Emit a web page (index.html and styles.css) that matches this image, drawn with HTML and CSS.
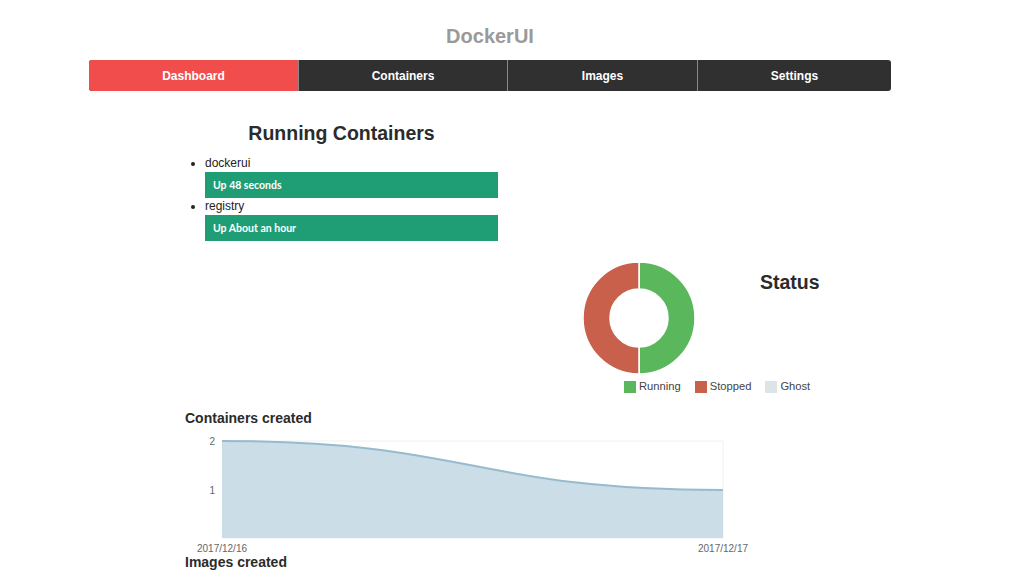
FILE: index.html
```html
<!DOCTYPE html>
<html>
<head>
<meta charset="utf-8">
<title>DockerUI</title>
<link rel="stylesheet" href="styles.css">
</head>
<body>
<header class="header">
  <h1 class="title">DockerUI</h1>
  <nav class="nav">
    <a class="tab tab-dash active">Dashboard</a>
    <a class="tab tab-cont">Containers</a>
    <a class="tab tab-img">Images</a>
    <a class="tab tab-set">Settings</a>
  </nav>
</header>
<main class="main">
  <section class="running">
    <h2 class="running-title">Running Containers</h2>
    <ul class="clist">
      <li class="citem"><span class="cname">dockerui</span><div class="cbar">Up 48 seconds</div></li>
      <li class="citem"><span class="cname">registry</span><div class="cbar">Up About an hour</div></li>
    </ul>
  </section>
  <section class="status">
    <div class="status-row">
      <svg class="donut" width="114" height="114" viewBox="0 0 114 114">
        <path d="M57,1 A56,56 0 0 1 57,113 L57,86 A29,29 0 0 0 57,28 Z" fill="#5bb75b" stroke="#fff" stroke-width="1.5"/>
        <path d="M57,1 A56,56 0 0 0 57,113 L57,86 A29,29 0 0 1 57,28 Z" fill="#c8604c" stroke="#fff" stroke-width="1.5"/>
      </svg>
      <h2 class="status-title">Status</h2>
    </div>
    <div class="legend">
      <span class="lg"><i class="sw sw-run"></i>Running</span>
      <span class="lg"><i class="sw sw-stop"></i>Stopped</span>
      <span class="lg"><i class="sw sw-ghost"></i>Ghost</span>
    </div>
  </section>
  <section class="created">
    <h3 class="ctitle">Containers created</h3>
    <svg class="linechart" width="580" height="121" viewBox="0 0 580 121">
      <line x1="37" y1="8" x2="538" y2="8" stroke="#f0f0f0" stroke-width="1"/>
      <line x1="37" y1="57" x2="538" y2="57" stroke="#f0f0f0" stroke-width="1"/>
      <line x1="538" y1="8" x2="538" y2="105" stroke="#f0f0f0" stroke-width="1"/>
      <line x1="37" y1="105" x2="538" y2="105" stroke="#eeeeee" stroke-width="1"/>
      <path d="M37,8 C287,8 288,57 538,57 L538,105 L37,105 Z" fill="#cbdde6"/>
      <path d="M37,8 C287,8 288,57 538,57" fill="none" stroke="#97bbcd" stroke-width="2"/>
      <text x="30" y="12" class="axis" text-anchor="end">2</text>
      <text x="30" y="61" class="axis" text-anchor="end">1</text>
      <text x="37" y="119" class="axis" text-anchor="middle">2017/12/16</text>
      <text x="538" y="119" class="axis" text-anchor="middle">2017/12/17</text>
    </svg>
    <h3 class="ctitle ctitle-img">Images created</h3>
  </section>
</main>
</body>
</html>
```

FILE: styles.css
```css
html, body {
  margin: 0;
  padding: 0;
  background: #fff;
}
body {
  font-family: "Liberation Sans", Arial, sans-serif;
  color: #333;
}
.header {
  padding-left: 89px;
}
.title {
  width: 802px;
  margin: 24px 0 0 0;
  text-align: center;
  font-size: 20px;
  line-height: 24px;
  font-weight: bold;
  color: #9a9a9a;
}
.nav {
  display: flex;
  width: 802px;
  height: 31px;
  margin-top: 12px;
  background: #303030;
  border-radius: 3px;
  overflow: hidden;
}
.tab {
  display: flex;
  align-items: center;
  justify-content: center;
  color: #fff;
  font-weight: bold;
  font-size: 12px;
  box-sizing: border-box;
  border-left: 1px solid #8a8a8a;
}
.tab-dash { width: 209px; border-left: none; }
.tab-cont { width: 209px; }
.tab-img { width: 190px; }
.tab-set { width: 194px; }
.active {
  background: #f24d4d;
}
.main {
  padding-left: 185px;
}
.running {
  width: 313px;
}
.running-title {
  margin: 30px 0 0 0;
  text-align: center;
  font-size: 19.5px;
  line-height: 24px;
  font-weight: bold;
  color: #2b2b2b;
}
.clist {
  margin: 10px 0 0 0;
  padding-left: 20px;
  font-size: 12px;
  color: #222;
}
.cname {
  display: block;
  line-height: 17px;
}
.cbar {
  height: 26px;
  width: 293px;
  box-sizing: border-box;
  padding-left: 8px;
  display: flex;
  align-items: center;
  background: #1f9e76;
  color: #fff;
  font-family: Lato, "Liberation Sans", sans-serif;
  font-weight: bold;
  font-size: 10.5px;
}
.status {
  margin-top: 20px;
}
.status-row {
  display: flex;
  align-items: flex-start;
  padding-left: 397px;
}
.donut {
  display: block;
}
.status-title {
  margin: 9px 0 0 64px;
  font-size: 19.5px;
  line-height: 24px;
  font-weight: bold;
  color: #2b2b2b;
}
.legend {
  display: flex;
  gap: 14px;
  margin: 5px 0 0 439px;
  font-size: 11.2px;
  line-height: 13px;
  color: #444;
}
.lg {
  display: flex;
  align-items: center;
}
.sw {
  display: inline-block;
  width: 12px;
  height: 12px;
  margin-right: 3px;
}
.sw-run { background: #5bb75b; }
.sw-stop { background: #c8604c; }
.sw-ghost { background: #dde4e6; }
.ctitle {
  margin: 17px 0 0 0;
  font-size: 14px;
  line-height: 17px;
  font-weight: bold;
  color: #2b2b2b;
}
.ctitle-img {
  margin-top: 0;
}
.linechart {
  display: block;
  margin-top: 6px;
}
.axis {
  font-family: "Liberation Sans", Arial, sans-serif;
  font-size: 10px;
  fill: #666;
}
```
